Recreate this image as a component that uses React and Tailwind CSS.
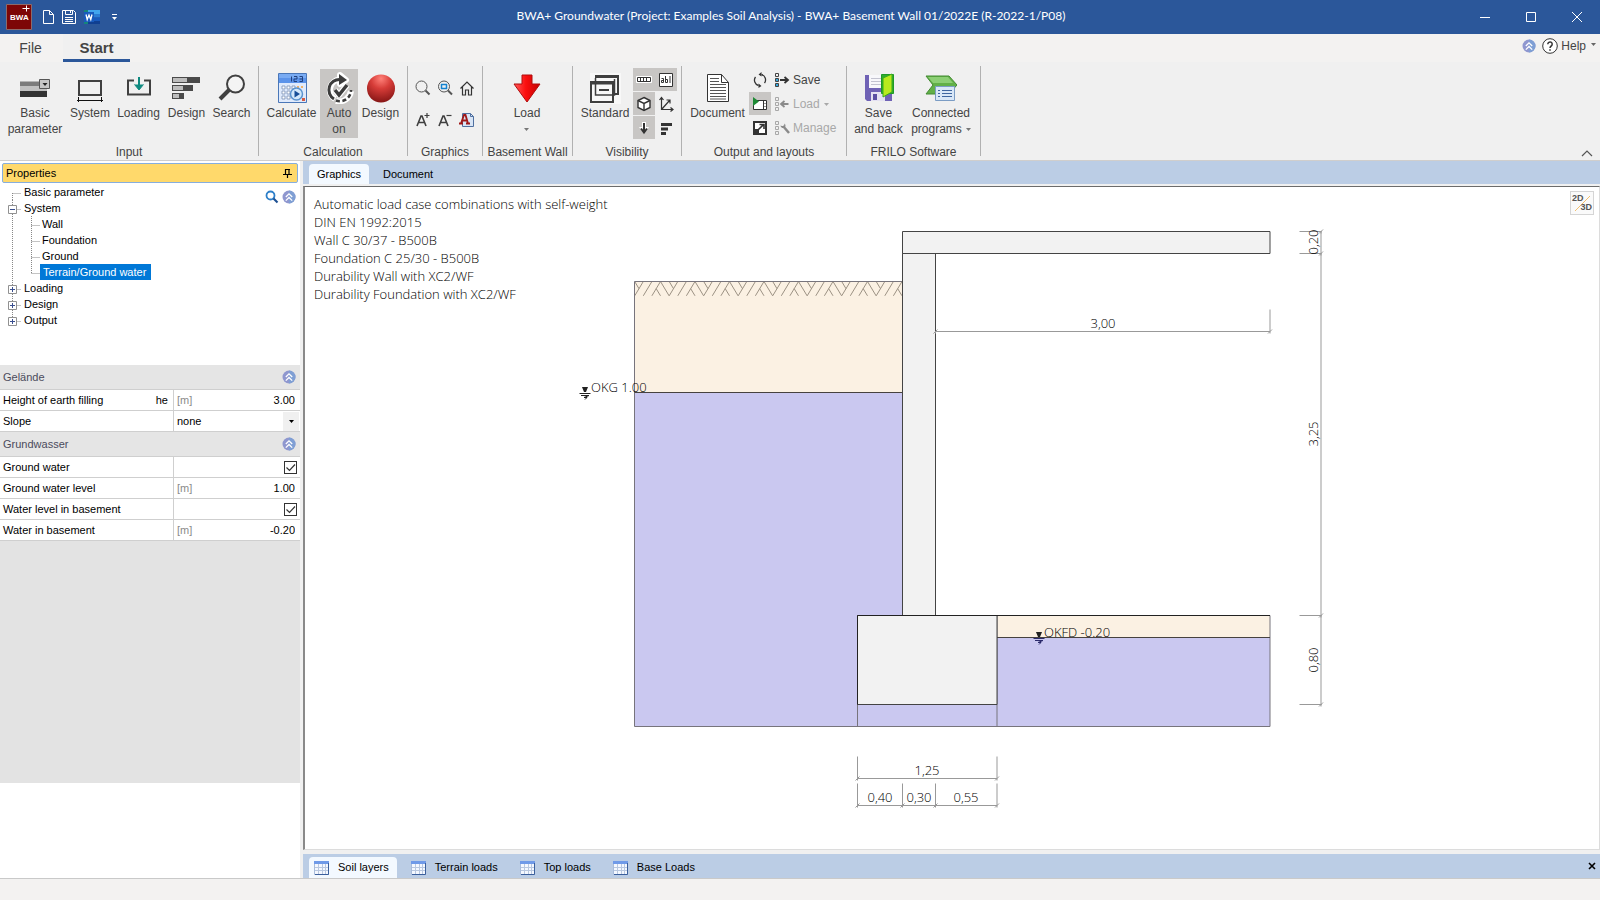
const TITLE = "BWA+ Groundwater (Project: Examples Soil Analysis) - BWA+ Basement Wall 01/2022E (R-2022-1/P08)";

const Icon = ({ size = 32, children, className = "" }) => (
  <svg width={size} height={size} viewBox={`0 0 ${size} ${size}`} fill="none" className={`shrink-0 ${className}`} aria-hidden="true">
    {children}
  </svg>
);

const CollapseIcon = () => (
  <Icon size={14}>
    <circle cx="7" cy="7" r="6.5" fill="#8f97cf" />
    <path d="M7 .5a6.5 6.5 0 0 1 0 13z" fill="#7f9fd4" />
    <path d="M3.8 7 7 3.9 10.2 7M3.8 10.6 7 7.5l3.2 3.1" stroke="#fff" strokeWidth="1.3" />
  </Icon>
);

const BasicIcon = () => (
  <Icon>
    <path d="M1 9.500h20v6H1z" fill="#7b7b7b" />
    <path d="M1 14h27v5H1z" fill="#c0c0c0" />
    <path d="M1 19h27v6H1z" fill="#333" />
    <path d="M20.500 7.500h10v9h-10z" fill="#c6c6c6" stroke="#555" />
    <path d="M23.500 11h5L26 14z" fill="#222" />
  </Icon>
);

const SystemIcon = () => (
  <Icon>
    <path d="M5 9h22v14H5z" stroke="#404040" strokeWidth="2" />
    <path d="M3 28.500h26M4.500 25v5M27.500 25v5" stroke="#111" />
  </Icon>
);

const LoadingIcon = () => (
  <Icon>
    <path d="M11 8.500H5v14h22v-14h-6" stroke="#404040" strokeWidth="2" />
    <path d="M16 5v12" stroke="#0e8a80" strokeWidth="2" />
    <path d="M11.500 12.500 16 18l4.500-5.500" fill="#0e8a80" stroke="#0e8a80" />
  </Icon>
);

const DesignIcon = () => (
  <Icon>
    <path d="M1 5h28v6H1zM1 13h21v6H1zM1 21h12v6H1z" fill="#4a4a4a" />
    <path d="M2 6h14v4H2zM2 14h10v4H2zM2 22h6v4H2z" fill="#bdbdbd" />
  </Icon>
);

const SearchIcon = () => (
  <Icon>
    <circle cx="19.500" cy="12" r="8.500" fill="#f4f4f4" stroke="#404040" strokeWidth="2" />
    <path d="m13 18-9 9" stroke="#404040" strokeWidth="4" />
  </Icon>
);

const CalculateIcon = () => (
  <Icon>
    <path d="M2.500 1.500h28v29h-28z" fill="#dfeafc" stroke="#4a77b8" />
    <path d="M3 2h27v9H3z" fill="#5b93ea" />
    <path d="M3 2h27v4H3z" fill="#79abf3" />
    <path d="M15.500 4.500v5M18 4.500h3v2.500h-3v2.500h3M23.500 4.500h3v5h-3M23.500 7h3" stroke="#20407e" />
    <path d="M6 14h3v3H6zM11 14h3v3h-3zM16 14h3v3h-3zM6 19h3v3H6zM11 19h3v3h-3zM6 24h3v3H6zM11 24h3v3h-3z" fill="#fff" stroke="#7890b4" strokeWidth=".8" />
    <path d="M21 14h2v2h-2zM25 14h2v2h-2z" fill="#f0b36a" />
    <path d="M26 26h3v3h-3z" fill="#d45b44" />
    <circle cx="20.500" cy="22" r="6" fill="#d2e8fb" stroke="#5a93cf" strokeWidth="1.500" />
    <path d="m18.500 18.500 5.500 3.500-5.500 3.500z" fill="#174f99" />
  </Icon>
);

const AutoIcon = () => (
  <Icon>
    <g stroke="#fff" strokeWidth="6" strokeLinejoin="round">
      <path d="M12 27A10.500 10.500 0 0 1 17 7.500M13 29a12 12 0 0 0 15-10" />
      <path d="m17 3 6 5-6 4zM12 18l4 5 8-10" />
    </g>
    <path d="M11 27A10.500 10.500 0 0 1 17 7.500" stroke="#3c3c3c" strokeWidth="3" />
    <path d="M13 28.500A11 11 0 0 0 28 18" stroke="#3c3c3c" strokeWidth="2.500" strokeDasharray="4 2.500" />
    <path d="m16 2 8 6-8 5z" fill="#3c3c3c" />
    <path d="m12 18 4 5 8-10" stroke="#3c3c3c" strokeWidth="3.500" />
  </Icon>
);

const BallIcon = () => (
  <Icon>
    <defs>
      <radialGradient id="ball" cx=".5" cy=".15" r=".9">
        <stop offset="0" stopColor="#ff8078" />
        <stop offset=".4" stopColor="#d63c38" />
        <stop offset="1" stopColor="#7e1212" />
      </radialGradient>
    </defs>
    <circle cx="16" cy="16.500" r="14" fill="url(#ball)" />
  </Icon>
);

const RedArrowIcon = () => (
  <Icon>
    <defs>
      <linearGradient id="red" x1="0" x2="1">
        <stop offset="0" stopColor="#ff5a5a" />
        <stop offset=".45" stopColor="#fb1010" />
        <stop offset="1" stopColor="#c40000" />
      </linearGradient>
    </defs>
    <path d="M11 3h10v9h8L16 30 3 12h8z" fill="url(#red)" stroke="#b00c0c" strokeLinejoin="round" />
  </Icon>
);

const StandardIcon = () => (
  <Icon>
    <path d="M1 1h31v31H1z" fill="#f8f8f8" />
    <path d="M10 4h19v18h-3" stroke="#3f3f3f" strokeWidth="2" />
    <path d="M6 3h24v3H6z" fill="#3f3f3f" />
    <path d="M2 10h22v20H2zM2 11.500h22" stroke="#3f3f3f" strokeWidth="2" />
    <path d="M6.500 6v17h19V7" stroke="#3f3f3f" strokeWidth="1.500" />
    <path d="M10 18h10" stroke="#3f3f3f" strokeWidth="2" />
  </Icon>
);

const DocumentIcon = () => (
  <Icon>
    <path d="M5.500 2.500h14l7 8v19h-21z" fill="#fff" stroke="#333" />
    <path d="M19.500 2.500v8h7" stroke="#333" />
    <path d="M8 6.500h9M8 9.500h9M8 12.500h16M8 15.500h16M8 18.500h16M8 21.500h16M8 24.500h16M8 27h16" stroke="#555" />
  </Icon>
);

const SaveBackIcon = () => (
  <Icon>
    <path d="M2 3h27v26H4l-2-2z" fill="#6f62b5" />
    <path d="M6 3h16v13H6z" fill="#f7f7fa" />
    <path d="M8 6.500h12M8 9.500h12M8 12.500h12" stroke="#c3c3d0" />
    <path d="M8 20h14v9H8z" fill="#e4e1f2" />
    <path d="M10 22h4v6h-4z" fill="#5b4fa3" />
    <path d="M18.500 2.500h12v19h-12z" fill="#2fae2f" stroke="#1e9a26" />
    <path d="m20 6 9-4v18l-9 5z" fill="#b9ea1e" stroke="#39a91c" />
  </Icon>
);

const ConnectedIcon = () => (
  <Icon>
    <path d="M1 4h23l8 9-8 9H1l7-9z" fill="#62b048" stroke="#438b32" />
    <path d="M3 5h20l5 6H8z" fill="#8ccf74" />
    <path d="M10.500 14.500h19v14h-19z" fill="#d9e7f7" stroke="#7b9cc4" />
    <path d="M13 18.500h2M13 21.500h2M13 24.500h2M17 18.500h10M17 21.500h10M17 24.500h10" stroke="#3f66a0" />
  </Icon>
);

const Caret = ({ className = "text-[#777]" }) => (
  <svg width="5" height="3" viewBox="0 0 5 3" className={`inline-block align-middle ${className}`} aria-hidden="true">
    <path d="M0 0h5L2.500 3z" fill="currentColor" />
  </svg>
);

const BigButton = ({ icon, lines, width, active, caret }) => (
  <button className={`flex h-[69px] shrink-0 flex-col items-center pt-[3px] ${width} ${active ? "bg-[#c8c6c4]" : ""}`}>
    {icon}
    <span className="mt-px flex flex-col text-center text-[12px] leading-4 whitespace-nowrap">
      {lines.map((line, i) => (
        <span key={i}>
          {line}
          {caret && i === lines.length - 1 && <Caret className={line ? "ml-1 text-[#777]" : "text-[#777]"} />}
        </span>
      ))}
    </span>
  </button>
);

const SmallButton = ({ label, active, className = "", children }) => (
  <button aria-label={label} className={`flex items-center justify-center ${active ? "bg-[#c8c6c4]" : ""} ${className}`}>
    <Icon size={16}>{children}</Icon>
  </button>
);

const Group = ({ title, width, children }) => (
  <section className={`flex shrink-0 ${width}`}>
    <div className="flex min-w-0 flex-1 flex-col">
      <div className="flex h-[78px] pt-[3px] pl-1">{children}</div>
      <h2 className="text-center text-[12px] leading-4 whitespace-nowrap">{title}</h2>
    </div>
    <div className="h-[90px] w-px bg-[#b1b1b1]" />
  </section>
);

const AText = ({ sign }) => (
  <>
    <path d="M2 14 6 4h1l4 10M3.500 10.500h6" stroke="#3f3f3f" strokeWidth="1.600" />
    <path d={sign === "+" ? "M9.500 3.500h5M12 1v5" : "M9.500 3.500h5"} stroke="#3f3f3f" strokeWidth="1.200" />
  </>
);

const GraphicsTools = () => (
  <div className="grid grid-cols-3 content-start pt-[3px]">
    <SmallButton label="Zoom" className="h-8 w-[22px]">
      <circle cx="6.500" cy="6.500" r="5.500" stroke="#555" />
      <path d="m10.500 10.500 4 4" stroke="#555" strokeWidth="2" />
    </SmallButton>
    <SmallButton label="Zoom all" className="h-8 w-[22px]">
      <circle cx="7" cy="6.500" r="5.500" stroke="#555" />
      <path d="m11 10.500 4 4" stroke="#555" strokeWidth="2" />
      <path d="M4.500 4.500h5v4h-5z" stroke="#1583d0" strokeWidth="1.500" />
    </SmallButton>
    <SmallButton label="Home view" className="h-8 w-[22px]">
      <path d="M1.500 8.500 8 2l6.500 6.500M3.500 7v8h3v-5h3v5h3V7" stroke="#333" strokeWidth="1.200" />
    </SmallButton>
    <SmallButton label="Larger text" className="h-8 w-[22px]"><AText sign="+" /></SmallButton>
    <SmallButton label="Smaller text" className="h-8 w-[22px]"><AText sign="-" /></SmallButton>
    <SmallButton label="Text settings" className="h-8 w-[22px]">
      <path d="M3.500 1.500h8l3 3v10h-11z" fill="#d8e5f6" stroke="#5070a0" />
      <path d="M11.500 1.500v3h3" stroke="#5070a0" />
      <path d="M2 11.500 5 3h1.500L9 11.500M3.500 8.500h4M0 11.500h4M7 11.500h4" stroke="#a01818" strokeWidth="1.800" />
    </SmallButton>
  </div>
);

const VisibilityTools = () => (
  <div className="-mt-px grid grid-cols-2 content-start gap-y-px">
    <SmallButton label="Dimensions" active className="h-[23px] w-[22px]">
      <path d="M.5 4.500h15v6H.5z" fill="#fff" stroke="#fff" />
      <path d="M1.500 5.500h13v4h-13zM4.500 6v3M7.500 6v3M10.500 6v3" stroke="#333" />
    </SmallButton>
    <SmallButton label="Labels" active className="h-[23px] w-[22px]">
      <path d="M1.500 1.500h13v13h-13z" fill="#fff" stroke="#333" />
      <path d="M3.500 6.500h2v4h-2v-2h2M7.500 4v6.500h2v-3h-2M12 4v7" stroke="#333" />
    </SmallButton>
    <SmallButton label="3D body" active className="h-[23px] w-[22px]">
      <path d="m8 1.500 6 3v7l-6 3-6-3v-7z" fill="#fff" stroke="#333" strokeWidth="1.400" />
      <path d="m2 4.500 6 3 6-3M8 7.500v7" stroke="#333" strokeWidth="1.400" />
    </SmallButton>
    <SmallButton label="Axes" className="h-[23px] w-[22px]">
      <path d="M3.500 2v11.500H15M3.500 13.500l8-9M1.500 4l2-2.500 2 2.500M12.500 11.500l2.500 2-2.500 2M8.500 4h3.500v3.500" stroke="#333" strokeWidth="1.200" />
    </SmallButton>
    <SmallButton label="Loads" active className="h-[23px] w-[22px]">
      <path d="M6 2h4v5h3l-5 7-5-7h3z" fill="#fff" />
      <path d="M8 3v9M5 8.500l3 4 3-4" stroke="#333" strokeWidth="2" />
    </SmallButton>
    <SmallButton label="Results" className="h-[23px] w-[22px]">
      <path d="M3 3h11v3H3zM3 7.500h7v3H3zM3 12h5v3H3z" fill="#333" />
    </SmallButton>
  </div>
);

const Boxes = ({ blue }) => (
  <>
    <path d="M1.500 1.500h3v3h-3z" stroke="currentColor" />
    <path d="M1.500 6.500h3v3h-3zM1.500 11.500h3v3h-3z" stroke="currentColor" fill={blue ? "#35a7dd" : "none"} />
  </>
);

const LayoutButton = ({ label, disabled, caret, children }) => (
  <button disabled={disabled} className={`flex h-6 items-center gap-[3px] text-[12px] ${disabled ? "text-[#a8a8a8]" : ""}`}>
    <Icon size={16}>
      <Boxes blue={!disabled} />
      {children}
    </Icon>
    {label}
    {caret && <Caret className="ml-px text-[#a8a8a8]" />}
  </button>
);

const OutputTools = () => (
  <>
    <div className="-mt-px flex flex-col gap-px">
      <SmallButton label="Refresh" className="h-[23px] w-[22px]">
        <path d="M9.500 2.500A5.500 5.500 0 0 1 12.500 11M6.500 13.500A5.500 5.500 0 0 1 3.500 5" stroke="#333" strokeWidth="1.300" />
        <path d="M9.500 0v4.500L6.500 2.500zM6.500 11.500V16l3-2z" fill="#333" />
      </SmallButton>
      <SmallButton label="Play layout" active className="h-[23px] w-[22px]">
        <path d="M1.500 4.500h13v9h-13z" fill="#fff" stroke="#333" />
        <path d="M11.500 4.500v9M13 7v1M13 10v1" stroke="#333" />
        <path d="m1 1 6 4.500L1 10z" fill="#1e8a35" />
      </SmallButton>
      <SmallButton label="Open external" className="h-[23px] w-[22px]">
        <path d="M2 2h12v12H2z" fill="#fff" stroke="#333" strokeWidth="2" />
        <path d="M1 9h6v6H1z" fill="#333" />
        <path d="m6.500 9.500 5-5M7.500 4.500H12V9" stroke="#333" strokeWidth="1.600" />
      </SmallButton>
    </div>
    <div className="-mt-px flex flex-col pl-[3px]">
      <LayoutButton label="Save">
        <path d="M6 8h7.500M10.500 5l3.500 3-3.500 3" stroke="#333" strokeWidth="1.800" />
      </LayoutButton>
      <LayoutButton label="Load" disabled caret>
        <path d="M14.500 8H7.500M10.500 5 7 8l3.500 3" stroke="#8a8a8a" strokeWidth="1.800" />
      </LayoutButton>
      <LayoutButton label="Manage" disabled>
        <path d="m9 6 6 7" stroke="#8a8a8a" strokeWidth="2.500" />
        <path d="M6.500 5.500a2.500 2.500 0 0 0 4 2 2.500 2.500 0 0 0 0-4L10 6 8 6z" fill="#8a8a8a" />
      </LayoutButton>
    </div>
  </>
);

const TitleBar = () => (
  <header className="flex h-[34px] shrink-0 items-center bg-[#2b579a] text-white">
    <div className="flex w-[160px] shrink-0 items-center pl-[6px]">
      <svg width="26" height="26" viewBox="0 0 26 26" fill="none" aria-hidden="true">
        <path d="M.5.500h25v25H.5z" fill="#7d0606" stroke="#8d6a6a" />
        <text x="4" y="16" fill="#fff" fontSize="8" fontWeight="bold" fontFamily="Liberation Sans, sans-serif">BWA</text>
        <path d="M16.500 4.500h7M20.500 1.500v6" stroke="#fff" />
      </svg>
      <button aria-label="New" className="ml-2">
        <Icon size={14}><path d="M3.500.5h6l4 4v9h-10z M9.500.5v4h4" stroke="#fff" /></Icon>
      </button>
      <button aria-label="Save" className="ml-[7px]">
        <Icon size={16}>
          <path d="M1.500 1.500h11l2 2v11h-13zM4.500 1.500v4h7v-4M9.500 2v2M4 8.500h8M4 10.500h8M4 12.500h8" stroke="#fff" />
        </Icon>
      </button>
      <button aria-label="Word" className="ml-[7px]">
        <Icon size={16}>
          <path d="M0 1h16v4H0z" fill="#41a5ee" />
          <path d="M0 5h16v3.500H0z" fill="#2b7cd3" />
          <path d="M0 8.500h16V12H0z" fill="#185abd" />
          <path d="M0 12h16v3H0z" fill="#103f91" />
          <path d="M0 1h4v2H0zM0 13h4v2H0z" fill="#15857a" />
          <path d="M0 3h10v10H0z" fill="#185abd" />
          <path d="m2 5.500 1.200 5L5 6l1.800 4.500L8 5.500" stroke="#fff" strokeWidth="1.300" />
        </Icon>
      </button>
      <button aria-label="Customize quick access" className="ml-[11px]">
        <Icon size={7}><path d="M1 .5h5" stroke="#fff" /><path d="M1 3h5L3.500 6z" fill="#fff" /></Icon>
      </button>
    </div>
    <h1 className="flex-1 pb-[2px] text-center font-[Lato,sans-serif] text-[12px]">{TITLE}</h1>
    <div className="flex w-[178px] shrink-0 items-center justify-end">
      <button aria-label="Minimize" className="flex w-[46px] justify-center"><Icon size={10}><path d="M0 5.500h10" stroke="#fff" /></Icon></button>
      <button aria-label="Maximize" className="flex w-[46px] justify-center"><Icon size={10}><path d="M.5.500h9v9h-9z" stroke="#fff" /></Icon></button>
      <button aria-label="Close" className="flex w-[46px] justify-center"><Icon size={10}><path d="m0 0 10 10M10 0 0 10" stroke="#fff" /></Icon></button>
    </div>
  </header>
);

const RibbonTabs = () => (
  <nav className="flex h-7 shrink-0 items-stretch bg-[#f3f2f1] pr-1">
    <button className="w-[63px] pr-[2px] text-sm">File</button>
    <button className="w-[67px] border-b-[3px] border-[#2b579a] bg-[#f0f0f0] pt-[3px] text-[15px] leading-5 font-bold">Start</button>
    <div className="ml-auto flex items-center gap-[6px] pb-1">
      <button aria-label="Collapse"><CollapseIcon /></button>
      <button className="flex items-center gap-[3px] text-[12px]">
        <Icon size={16}>
          <circle cx="8" cy="8" r="7.300" fill="#fff" stroke="#333" />
          <path d="M5.800 6.200a2.200 2.200 0 1 1 3.400 1.800C8.300 8.600 8 9 8 10M8 11.200v1.500" stroke="#333" strokeWidth="1.500" />
        </Icon>
        Help
        <Caret className="mb-1 ml-[2px] text-[#666]" />
      </button>
    </div>
  </nav>
);

const Ribbon = () => (
  <div className="flex h-[99px] shrink-0 border-b border-[#d0cecc] bg-[#f0f0f0] pt-1">
    <Group title="Input" width="w-[259px]">
      <BigButton icon={<BasicIcon />} lines={["Basic", "parameter"]} width="w-[62px]" />
      <BigButton icon={<SystemIcon />} lines={["System"]} width="w-[48px]" />
      <BigButton icon={<LoadingIcon />} lines={["Loading"]} width="w-[49px]" />
      <BigButton icon={<DesignIcon />} lines={["Design"]} width="w-[47px]" />
      <BigButton icon={<SearchIcon />} lines={["Search"]} width="w-[43px]" />
    </Group>
    <Group title="Calculation" width="w-[149px]">
      <BigButton icon={<CalculateIcon />} lines={["Calculate"]} width="w-[57px]" />
      <BigButton icon={<AutoIcon />} lines={["Auto", "on"]} width="w-[38px]" active />
      <BigButton icon={<BallIcon />} lines={["Design"]} width="w-[45px]" />
    </Group>
    <Group title="Graphics" width="w-[75px]">
      <GraphicsTools />
    </Group>
    <Group title="Basement Wall" width="w-[90px]">
      <BigButton icon={<RedArrowIcon />} lines={["Load", ""]} width="w-[80px]" caret />
    </Group>
    <Group title="Visibility" width="w-[109px]">
      <BigButton icon={<StandardIcon />} lines={["Standard"]} width="w-[56px]" />
      <VisibilityTools />
    </Group>
    <Group title="Output and layouts" width="w-[165px]">
      <BigButton icon={<DocumentIcon />} lines={["Document"]} width="w-[63px]" />
      <OutputTools />
    </Group>
    <Group title="FRILO Software" width="w-[134px]">
      <BigButton icon={<SaveBackIcon />} lines={["Save", "and back"]} width="w-[55px]" />
      <BigButton icon={<ConnectedIcon />} lines={["Connected", "programs"]} width="w-[70px]" caret />
    </Group>
    <button aria-label="Collapse ribbon" className="mt-auto mr-[7px] ml-auto">
      <Icon size={12}><path d="m1 8 5-5 5 5" stroke="#555" strokeWidth="1.200" /></Icon>
    </button>
  </div>
);

const TREE = [
  { name: "Basic parameter", level: 0 },
  { name: "System", level: 0, box: "-" },
  { name: "Wall", level: 1 },
  { name: "Foundation", level: 1 },
  { name: "Ground", level: 1 },
  { name: "Terrain/Ground water", level: 1, selected: true },
  { name: "Loading", level: 0, box: "+" },
  { name: "Design", level: 0, box: "+" },
  { name: "Output", level: 0, box: "+" },
];

const TreeLines = ({ item, first, last }) => (
  <svg width={item.level ? 40 : 22} height="16" fill="none" className="shrink-0" aria-hidden="true">
    {item.level === 0 && (
      <path d={`M12.500 ${first ? 9 : 0}V${last ? 9 : 16}M12.500 9.500H21`} stroke="#888" strokeDasharray="1 1" />
    )}
    {item.level === 1 && (
      <path d={`M12.500 0V16M31.500 0V${item.selected ? 9 : 16}M31.500 9.500H40`} stroke="#888" strokeDasharray="1 1" />
    )}
    {item.box && (
      <>
        <path d="M8.500 5.500h8v8h-8z" fill="#fff" stroke="#919191" />
        <path d={item.box === "+" ? "M10 9.500h5M12.500 7v5" : "M10 9.500h5"} stroke="#3a4f8f" />
      </>
    )}
  </svg>
);

const Tree = () => (
  <div className="flex h-[182px] shrink-0 justify-between bg-white pt-px pr-1">
    <ul className="text-[11px] leading-4 text-black">
      {TREE.map((item, i) => (
        <li key={item.name} className="flex h-4 items-center">
          <TreeLines item={item} first={i === 0} last={i === TREE.length - 1} />
          <button className={`px-[2px] ${item.selected ? "bg-[#0078d7] px-[3px] pr-[5px] text-white" : ""}`}>{item.name}</button>
        </li>
      ))}
    </ul>
    <div className="flex items-start gap-[3px] pt-[6px]">
      <button aria-label="Find property">
        <Icon size={14}>
          <circle cx="5.500" cy="5.500" r="4" stroke="#2d7fc9" strokeWidth="1.800" />
          <path d="m8.500 8.500 4 4" stroke="#1d4f93" strokeWidth="2.200" />
        </Icon>
      </button>
      <button aria-label="Collapse tree"><CollapseIcon /></button>
    </div>
  </div>
);

const SectionHeader = ({ title }) => (
  <div className="flex h-[25px] items-center justify-between border-b border-[#cfcfcf] bg-[#e5e5e5] pr-1 pl-[3px] text-[11px] text-[#4b4b5c]">
    {title}
    <button aria-label={`Collapse ${title}`}><CollapseIcon /></button>
  </div>
);

const Row = ({ id, label, symbol, unit, children }) => (
  <div className="flex h-[21px] border-b border-[#cfcfcf] bg-white text-[11px] text-black">
    <label htmlFor={id} className="flex w-[174px] shrink-0 items-center justify-between border-r border-[#cfcfcf] pr-[5px] pl-[3px]">
      <span>{label}</span>
      <span>{symbol}</span>
    </label>
    <div className="flex min-w-0 flex-1 items-center pl-[3px]">
      {unit && <span className="text-[#8a8a8a]">{unit}</span>}
      {children}
    </div>
  </div>
);

const NumberField = ({ id, value }) => (
  <input id={id} defaultValue={value} className="ml-auto w-20 pr-[5px] text-right outline-none" />
);

const CheckField = ({ id }) => (
  <span className="mr-[3px] ml-auto grid">
    <input id={id} type="checkbox" defaultChecked className="peer col-start-1 row-start-1 size-[13px] appearance-none border border-[#333] bg-white" />
    <svg viewBox="0 0 13 13" fill="none" className="pointer-events-none invisible col-start-1 row-start-1 size-[13px] peer-checked:visible">
      <path d="m2.500 6.500 3 3 5.500-6" stroke="#333" strokeWidth="1.200" />
    </svg>
  </span>
);

const Properties = () => (
  <aside className="flex w-[300px] shrink-0 flex-col bg-white pt-[2px]">
    <div className="mx-[2px] flex h-[20px] shrink-0 items-center justify-between rounded-xs border border-[#86aede] bg-[#ffd96b] pr-[5px] pl-[3px] text-[11px] text-black">
      Properties
      <button aria-label="Pin">
        <Icon size={9}><path d="M2.500 0v6M6 0v6M2 .5h5M0 5.500h9M4.500 6v3" stroke="#000" strokeWidth="1.200" /></Icon>
      </button>
    </div>
    <Tree />
    <SectionHeader title="Gelände" />
    <Row id="he" label="Height of earth filling" symbol="he" unit="[m]"><NumberField id="he" value="3.00" /></Row>
    <Row id="slope" label="Slope">
      <div className="grid flex-1 items-center pr-px">
        <select id="slope" className="col-start-1 row-start-1 appearance-none outline-none">
          <option>none</option>
        </select>
        <span className="pointer-events-none col-start-1 row-start-1 flex h-[19px] w-4 items-center justify-center justify-self-end bg-[#f0f0f0]">
          <Caret className="text-black" />
        </span>
      </div>
    </Row>
    <SectionHeader title="Grundwasser" />
    <Row id="gw" label="Ground water"><CheckField id="gw" /></Row>
    <Row id="gwl" label="Ground water level" unit="[m]"><NumberField id="gwl" value="1.00" /></Row>
    <Row id="wlb" label="Water level in basement"><CheckField id="wlb" /></Row>
    <Row id="wb" label="Water in basement" unit="[m]"><NumberField id="wb" value="-0.20" /></Row>
    <div className="flex-1 bg-[#e3e3e3]" />
    <div className="h-[95px] shrink-0 bg-white" />
  </aside>
);

const INFO = [
  "Automatic load case combinations with self-weight",
  "DIN EN 1992:2015",
  "Wall C 30/37 - B500B",
  "Foundation C 25/30 - B500B",
  "Durability Wall with XC2/WF",
  "Durability Foundation with XC2/WF",
];

const HATCH_STEP = 34.5;

const Hatch = () => (
  <g stroke="#9b9183" strokeWidth="1" clipPath="url(#soil)">
    {Array.from({ length: 8 }, (_, i) => (
      <path
        key={i}
        transform={`translate(${634.7 + i * HATCH_STEP} 281.5)`}
        d="M0 14.300 8.600 0M0 0l4.300 7.200M8.600 14.300 17.200 0M17.200 14.300 25.800 0M21.500 7.200l4.300 7.100M25.800 0l8.600 14.300"
      />
    ))}
  </g>
);

const Tick = ({ x, y }) => <path d={`M${x - 2} ${y + 2}l4-4M${x} ${y}v2`} />;

const LevelMark = ({ x, y, color }) => (
  <g>
    <path d={`M${x - 3} ${y - 6}h6l-2 5h-2z`} fill="#222" />
    <path d={`M${x - 5.5} ${y + 0.5}h11M${x - 4} ${y + 2.5}h8l-5 2h3l-2 2`} stroke={color} />
  </g>
);

const WallDrawing = () => (
  <svg
    viewBox="305 187 1294 662"
    preserveAspectRatio="xMidYMid meet"
    fill="none"
    className="absolute inset-0 h-full w-full font-['Open_Sans',sans-serif] font-light"
    role="img"
    aria-label="Section through basement wall"
  >
    <defs>
      <clipPath id="soil"><path d="M634.500 281h268v16h-268z" /></clipPath>
    </defs>
    <path d="M634.500 281.500h268v111h-268z" fill="#fbf1e3" />
    <path d="M634.500 392.500h268v223h-45v111h-223z" fill="#cac8f0" />
    <path d="M857.500 704.500h139.500v22H857.500z" fill="#cac8f0" />
    <path d="M997 615.500h273v22H997z" fill="#fbf1e3" />
    <path d="M997 637.500h273v89H997z" fill="#cac8f0" />
    <Hatch />
    <g stroke="#77747c">
      <path d="M634.500 726.500v-445h268" />
      <path d="M634.500 726.500h635.500v-111M857.500 704v22M997 615v111" />
    </g>
    <path d="M634.500 392.500h268M997 637.500h273" stroke="#46423f" />
    <g fill="#f2f2f2" stroke="#444">
      <path d="M902.500 253h33v362.500h-33z" />
      <path d="M902.500 231.500h367.500v22H902.500z" />
      <path d="M857.500 615.500h139.500v89H857.500z" />
    </g>
    <path d="M857.500 704.500v-89H1270" stroke="#222" />

    <g stroke="#999">
      <path d="M935.500 331.500H1270M1270 309.500v22" />
      <path d="M1321 231v474M1299.500 231.500h22M1299.500 253.500h22M1299.500 615.500h22M1299.500 704.500h22" />
      <path d="M857.500 778.500H997M857.500 756.500v22M997 756.500v22" />
      <path d="M857.500 805.500H997M857.500 783.500v22M902.500 783.500v22M935.500 783.500v22M997 783.500v22" />
      {[231.5, 253.5, 615.5, 704.5].map((y) => <Tick key={y} x={1321} y={y} />)}
      {[857.5, 902.5, 935.5, 997].map((x) => <Tick key={x} x={x} y={805.5} />)}
      {[857.5, 997].map((x) => <Tick key={x} x={x} y={778.5} />)}
      {[935.5, 1270].map((x) => <Tick key={x} x={x} y={331.5} />)}
    </g>

    <LevelMark x={585} y={393} color="#222" />
    <LevelMark x={1039} y={638} color="#2b2a6b" />

    <g fill="#000" fontSize="13">
      <text x="591" y="392">OKG 1.00</text>
      <text x="1044" y="637">OKFD -0.20</text>
      <g textAnchor="middle">
        <text x="1103" y="328">3,00</text>
        <text x="927" y="775">1,25</text>
        <text x="880" y="802">0,40</text>
        <text x="919" y="802">0,30</text>
        <text x="966" y="802">0,55</text>
        <text transform="translate(1318 242) rotate(-90)">0,20</text>
        <text transform="translate(1318 434) rotate(-90)">3,25</text>
        <text transform="translate(1318 660) rotate(-90)">0,80</text>
      </g>
    </g>
  </svg>
);

const TableIcon = () => (
  <Icon size={15}>
    <path d="M.5 1.500h14v13H.5z" fill="#f4f8ff" stroke="#a9bcdb" />
    <path d="M0 1h15v3H0z" fill="#6f9ae8" />
    <path d="M4.500 4v10M8.500 4v10M11.500 4v10M1 7.500h13M1 10.500h13" stroke="#b9c8e0" />
    <path d="M14.500 3v11.500H1" stroke="#3b5f9c" />
  </Icon>
);

const BOTTOM_TABS = ["Soil layers", "Terrain loads", "Top loads", "Base Loads"];

const Workspace = () => (
  <main className="flex min-w-0 flex-1 flex-col border-l-[3px] border-[#f0f0f0] bg-[#f0f0f0]">
    <div className="flex h-[23px] shrink-0 items-end bg-[#bbcde5] pl-[6px] text-[11px] text-black">
      <button className="h-5 rounded-t-sm bg-[#f3f9ff] px-2">Graphics</button>
      <button className="h-5 px-[14px]">Document</button>
    </div>
    <div className="relative mt-[2px] min-h-0 flex-1 border-t border-r border-b border-l-2 border-[#dcdcdc] border-t-[#6b6b6b] border-l-[#8a8a8a] bg-white">
      <WallDrawing />
      <div className="absolute top-2 left-[9px] font-['Open_Sans',sans-serif] text-[13px] leading-[18px] font-light text-black">
        {INFO.map((line) => <p key={line}>{line}</p>)}
      </div>
      <button className="absolute top-1 right-[5px] size-6 border border-[#d5d5d5] bg-[#fafafa] text-[9px] leading-none font-bold text-[#555]">
        <svg viewBox="0 0 22 22" className="absolute inset-0 size-full" aria-hidden="true"><path d="M4 19 19 4" stroke="#f3bf6c" /></svg>
        <span className="absolute top-[2px] left-px">2D</span>
        <span className="absolute right-px bottom-[2px]">3D</span>
      </button>
    </div>
    <div className="mt-1 flex h-6 shrink-0 items-end bg-[#bbcde5] pr-1 pl-[6px] text-[11px] text-black">
      {BOTTOM_TABS.map((tab, i) => (
        <button key={tab} className={`mr-[9px] flex h-[21px] items-center gap-[9px] rounded-t-sm pr-2 pl-[5px] ${i === 0 ? "bg-[#f3f9ff]" : ""}`}>
          <TableIcon />
          {tab}
        </button>
      ))}
      <button aria-label="Close table" className="mb-2 ml-auto">
        <Icon size={8}><path d="m1 1 6 6M7 1 1 7" stroke="#000" strokeWidth="1.600" /></Icon>
      </button>
    </div>
  </main>
);

const App = () => (
  <div className="flex h-screen flex-col overflow-hidden bg-[#f0f0f0] font-['Liberation_Sans',Arial,sans-serif] text-[#444]">
    <TitleBar />
    <RibbonTabs />
    <Ribbon />
    <div className="flex min-h-0 flex-1">
      <Properties />
      <Workspace />
    </div>
    <footer className="h-[22px] shrink-0 border-t border-[#c9c9c9] bg-[#f3f2f1]" />
  </div>
);

export default App;
